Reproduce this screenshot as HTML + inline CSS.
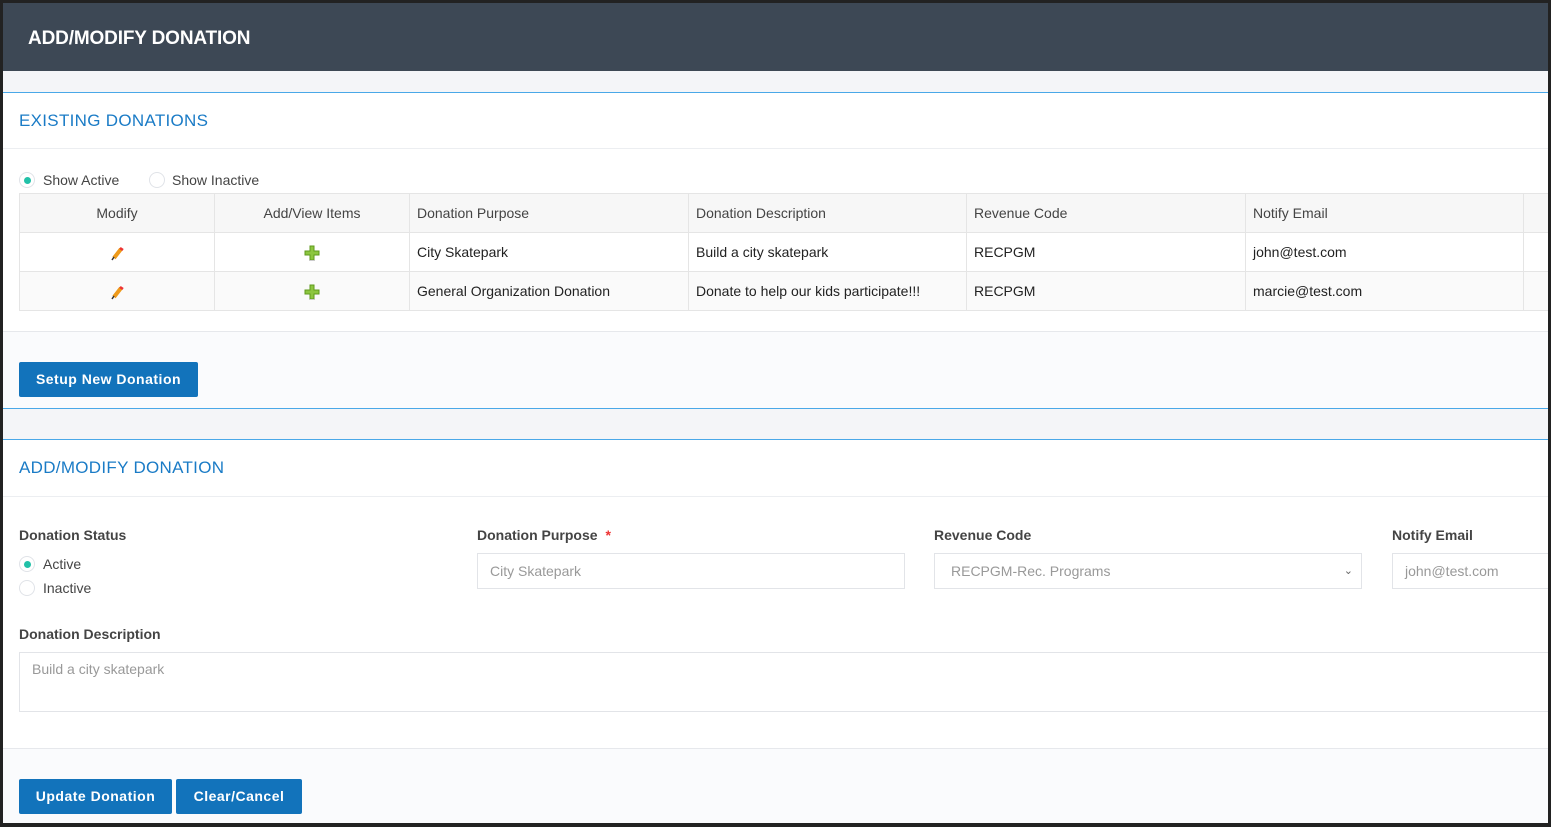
<!DOCTYPE html>
<html><head><style>
*{box-sizing:border-box;margin:0;padding:0}
body{width:1551px;height:827px;background:#222;font-family:"Liberation Sans",sans-serif;position:relative;overflow:hidden;color:#222}
.a{position:absolute}
.frame{left:3px;top:3px;width:1545px;height:820px;background:#fff;overflow:hidden}
.hdr{left:0;top:0;width:1545px;height:68px;background:#3d4855;color:#fff;font-weight:bold;font-size:19px;letter-spacing:-0.15px;padding:25px 0 0 25px}
.gray{background:#f4f5f8}
.bl{background:#4aa8e8;height:1px}
.ttl{color:#1a7bc6;font-size:17px;letter-spacing:.3px}
.sep{background:#eceef1;height:1px}
.foot{background:#fafbfd;border-top:1px solid #e6e8ec}
.btn{background:#1273bb;color:#fff;font-weight:bold;font-size:14px;letter-spacing:.5px;height:35px;line-height:35px;text-align:center;border-radius:2px}
.rad{width:16px;height:16px;border-radius:50%;border:1px solid #e0e3e8;background:#fff}
.rad.on::after{content:"";position:absolute;left:4px;top:4px;width:7px;height:7px;border-radius:50%;background:#22c1a8}
.lbl{font-size:14px;color:#444}
table{border-collapse:collapse;font-size:14px}
td{border:1px solid #e5e5e5;height:39px;padding:0 7px}
tr.h td{background:#f7f7f7;color:#444}
tr.s td{background:#fafafa}
.c{text-align:center}
.c svg{vertical-align:middle}
.fl{font-weight:bold;font-size:14px;color:#444}
.inp{border:1px solid #e2e4e8;background:#fff;color:#999;font-size:14px;padding:0 12px;line-height:34px;height:36px}
</style></head><body>
<div class="a frame">
<div class="a hdr">ADD/MODIFY DONATION</div>
<div class="a gray" style="left:0;top:68px;width:1545px;height:21px"></div>
<div class="a bl" style="left:0;top:89px;width:1545px"></div>
<div class="a ttl" style="left:16px;top:108px">EXISTING DONATIONS</div>
<div class="a sep" style="left:0;top:145px;width:1545px"></div>
<div class="a rad on" style="left:16px;top:169px"></div>
<div class="a lbl" style="left:40px;top:169px">Show Active</div>
<div class="a rad" style="left:146px;top:169px"></div>
<div class="a lbl" style="left:169px;top:169px">Show Inactive</div>
<table class="a" style="left:16px;top:190px;width:1540px">
<colgroup><col style="width:195px"><col style="width:195px"><col style="width:279px"><col style="width:278px"><col style="width:279px"><col style="width:278px"><col></colgroup>
<tr class="h"><td class="c">Modify</td><td class="c">Add/View Items</td><td>Donation Purpose</td><td>Donation Description</td><td>Revenue Code</td><td>Notify Email</td><td></td></tr>
<tr><td class="c"><svg width="16" height="16" viewBox="0 0 16 16"><path d="M5 13 L12 4" stroke="#ee9a1a" stroke-width="4"/><path d="M11 3 L14 5" stroke="#e33" stroke-width="2.5"/><path d="M3 15 L5 12" stroke="#333" stroke-width="1.5"/></svg></td><td class="c"><svg width="16" height="16" viewBox="0 0 16 16"><path d="M6 1h4v5h5v4h-5v5h-4v-5h-5v-4h5z" fill="#8cc63f" stroke="#5f9a1c" stroke-width="1"/><rect x="5" y="15" width="6" height="1" fill="#ccc"/></svg></td><td>City Skatepark</td><td>Build a city skatepark</td><td>RECPGM</td><td>john@test.com</td><td></td></tr>
<tr class="s"><td class="c"><svg width="16" height="16" viewBox="0 0 16 16"><path d="M5 13 L12 4" stroke="#ee9a1a" stroke-width="4"/><path d="M11 3 L14 5" stroke="#e33" stroke-width="2.5"/><path d="M3 15 L5 12" stroke="#333" stroke-width="1.5"/></svg></td><td class="c"><svg width="16" height="16" viewBox="0 0 16 16"><path d="M6 1h4v5h5v4h-5v5h-4v-5h-5v-4h5z" fill="#8cc63f" stroke="#5f9a1c" stroke-width="1"/><rect x="5" y="15" width="6" height="1" fill="#ccc"/></svg></td><td>General Organization Donation</td><td>Donate to help our kids participate!!!</td><td>RECPGM</td><td>marcie@test.com</td><td></td></tr>
</table>
<div class="a foot" style="left:0;top:328px;width:1545px;height:77px"></div>
<div class="a btn" style="left:16px;top:359px;width:179px">Setup New Donation</div>
<div class="a bl" style="left:0;top:405px;width:1545px"></div>
<div class="a gray" style="left:0;top:406px;width:1545px;height:30px"></div>
<div class="a bl" style="left:0;top:436px;width:1545px"></div>
<div class="a ttl" style="left:16px;top:455px">ADD/MODIFY DONATION</div>
<div class="a sep" style="left:0;top:493px;width:1545px"></div>
<div class="a fl" style="left:16px;top:524px">Donation Status</div>
<div class="a rad on" style="left:16px;top:553px"></div>
<div class="a lbl" style="left:40px;top:553px">Active</div>
<div class="a rad" style="left:16px;top:577px"></div>
<div class="a lbl" style="left:40px;top:577px">Inactive</div>
<div class="a fl" style="left:474px;top:524px">Donation Purpose <span style="color:#e33;margin-left:4px">*</span></div>
<div class="a inp" style="left:474px;top:550px;width:428px">City Skatepark</div>
<div class="a fl" style="left:931px;top:524px">Revenue Code</div>
<div class="a inp" style="left:931px;top:550px;width:428px;padding-left:16px">RECPGM-Rec. Programs<span style="position:absolute;right:8px;top:0;color:#666;font-size:11px">⌄</span></div>
<div class="a fl" style="left:1389px;top:524px">Notify Email</div>
<div class="a inp" style="left:1389px;top:550px;width:200px">john@test.com</div>
<div class="a fl" style="left:16px;top:623px">Donation Description</div>
<div class="a inp" style="left:16px;top:649px;width:1560px;height:60px;line-height:normal;padding-top:8px">Build a city skatepark</div>
<div class="a foot" style="left:0;top:745px;width:1545px;height:80px"></div>
<div class="a btn" style="left:16px;top:776px;width:153px">Update Donation</div>
<div class="a btn" style="left:173px;top:776px;width:126px">Clear/Cancel</div>
</div>
</body></html>
